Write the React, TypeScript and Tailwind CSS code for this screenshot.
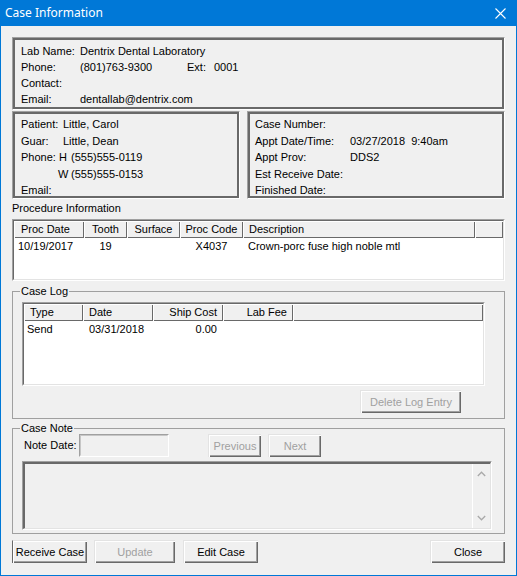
import React from "react";

const sunkenOuter =
  "border border-[#a0a0a0] border-r-white border-b-white";
const sunkenInner2 = "border-2 border-[#696969]";
const sunkenInner =
  "border border-[#696969] border-r-[#e3e3e3] border-b-[#e3e3e3]";
const hdr =
  "h-[17px] leading-[16px] bg-[#f0f0f0] shadow-[inset_1px_1px_0_#fff,inset_-1px_-1px_0_#696969] shrink-0 whitespace-nowrap overflow-hidden";
const btnBase =
  "h-[23px] bg-[#f0f0f0] shadow-[inset_1px_1px_0_#fff,inset_-1px_-1px_0_#696969,inset_-2px_-2px_0_#a0a0a0] border-t border-l border-[#e3e3e3] flex items-center justify-center leading-none";

function Btn({
  className,
  disabled,
  children,
}: {
  className: string;
  disabled?: boolean;
  children: React.ReactNode;
}) {
  return (
    <div
      className={`${btnBase} ${className} ${
        disabled ? "text-[#a0a0a0]" : "text-black"
      }`}
    >
      {children}
    </div>
  );
}

export default function App() {
  return (
    <div className="w-[517px] h-[576px] bg-[#f0f0f0] border border-[#0078d7] border-t-0 flex flex-col font-['Liberation_Sans',Arial,sans-serif] text-[11px] text-black overflow-hidden">
      {/* Title bar */}
      <div className="h-[26px] bg-[#0078d7] -mx-px flex items-center justify-between shrink-0">
        <span className="pl-[5px] text-white text-[12px] font-['Noto_Sans',sans-serif]">
          Case Information
        </span>
        <svg width="11" height="11" viewBox="0 0 11 11" className="mr-[11px]">
          <path d="M0.5 0.5 L10.5 10.5 M10.5 0.5 L0.5 10.5" stroke="#fff" strokeWidth="1.1" />
        </svg>
      </div>

      <div className="px-[11px] flex flex-col">
        {/* Lab box */}
        <div className={`${sunkenOuter} h-[73px] mt-[11px]`}>
          <div className={`${sunkenInner2} h-full pt-[3px] pl-[6px]`}>
            <div className="flex h-4 leading-4">
              <span className="w-[59px]">Lab Name:</span>
              <span>Dentrix Dental Laboratory</span>
            </div>
            <div className="flex h-4 leading-4">
              <span className="w-[59px]">Phone:</span>
              <span className="w-[107px]">(801)763-9300</span>
              <span className="w-[27px]">Ext:</span>
              <span>0001</span>
            </div>
            <div className="flex h-4 leading-4">
              <span className="w-[59px]">Contact:</span>
            </div>
            <div className="flex h-4 leading-4">
              <span className="w-[59px]">Email:</span>
              <span>dentallab@dentrix.com</span>
            </div>
          </div>
        </div>

        {/* Patient + Case boxes */}
        <div className="flex justify-between mt-px">
          <div className={`${sunkenOuter} w-[228px] h-[88px]`}>
            <div className={`${sunkenInner2} h-full pt-[2px] pl-[6px]`}>
              <div className="flex h-[16.5px] leading-[16.5px]">
                <span className="w-[42px]">Patient:</span>
                <span>Little, Carol</span>
              </div>
              <div className="flex h-[16.5px] leading-[16.5px]">
                <span className="w-[42px]">Guar:</span>
                <span>Little, Dean</span>
              </div>
              <div className="flex h-[16.5px] leading-[16.5px]">
                <span className="w-[37px]">Phone:</span>
                <span className="w-[13px] text-right pr-[4px]">H</span>
                <span>(555)555-0119</span>
              </div>
              <div className="flex h-[16.5px] leading-[16.5px]">
                <span className="w-[37px]"></span>
                <span className="w-[13px] text-right pr-[4px]">W</span>
                <span>(555)555-0153</span>
              </div>
              <div className="flex h-[16.5px] leading-[16.5px]">
                <span>Email:</span>
              </div>
            </div>
          </div>
          <div className={`${sunkenOuter} w-[258px] h-[88px]`}>
            <div className={`${sunkenInner2} h-full pt-[2px] pl-[5px]`}>
              <div className="flex h-[16.5px] leading-[16.5px]">
                <span className="w-[95px]">Case Number:</span>
              </div>
              <div className="flex h-[16.5px] leading-[16.5px]">
                <span className="w-[95px]">Appt Date/Time:</span>
                <span>03/27/2018&nbsp;&nbsp;9:40am</span>
              </div>
              <div className="flex h-[16.5px] leading-[16.5px]">
                <span className="w-[95px]">Appt Prov:</span>
                <span>DDS2</span>
              </div>
              <div className="flex h-[16.5px] leading-[16.5px]">
                <span className="w-[95px]">Est Receive Date:</span>
              </div>
              <div className="flex h-[16.5px] leading-[16.5px]">
                <span className="w-[95px]">Finished Date:</span>
              </div>
            </div>
          </div>
        </div>

        {/* Procedure Information */}
        <div className="mt-[2px] h-[14px] leading-[14px]">Procedure Information</div>
        <div className={`${sunkenOuter} mt-[4px] h-[62px] bg-white`}>
          <div className={`${sunkenInner} h-full bg-white`}>
            <div className="flex">
              <div className={`${hdr} w-[70px] pl-[7px]`}>Proc Date</div>
              <div className={`${hdr} w-[43px] text-center`}>Tooth</div>
              <div className={`${hdr} w-[53px] text-center`}>Surface</div>
              <div className={`${hdr} w-[63px] text-center`}>Proc Code</div>
              <div className={`${hdr} w-[232px] pl-[6px]`}>Description</div>
              <div className={`${hdr} flex-1`}></div>
            </div>
            <div className="flex h-4 leading-4">
              <div className="w-[70px] pl-[4px]">10/19/2017</div>
              <div className="w-[43px] text-center">19</div>
              <div className="w-[53px]"></div>
              <div className="w-[63px] text-center">X4037</div>
              <div className="pl-[5px]">Crown-porc fuse high noble mtl</div>
            </div>
          </div>
        </div>

        {/* Case Log */}
        <fieldset className="mt-[4px] h-[134px] border border-[#a0a0a0] pl-[9px] pr-[19px]">
          <legend className="-ml-[2px] px-[1px] leading-[12px]">Case Log</legend>
          <div className={`${sunkenOuter} mt-[5px] w-[463px] h-[84px] bg-white`}>
            <div className={`${sunkenInner} h-full bg-white`}>
              <div className="flex">
                <div className={`${hdr} w-[59px] pl-[6px]`}>Type</div>
                <div className={`${hdr} w-[70px] pl-[6px]`}>Date</div>
                <div className={`${hdr} w-[70px] text-right pr-[6px]`}>Ship Cost</div>
                <div className={`${hdr} w-[70px] text-right pr-[6px]`}>Lab Fee</div>
                <div className={`${hdr} flex-1`}></div>
              </div>
              <div className="flex h-4 leading-4">
                <div className="w-[59px] pl-[3px]">Send</div>
                <div className="w-[70px] pl-[6px]">03/31/2018</div>
                <div className="w-[70px] text-right pr-[6px]">0.00</div>
              </div>
            </div>
          </div>
          <div className="flex justify-end mt-[4px] pr-[24px]">
            <Btn className="w-[101px]" disabled>
              Delete Log Entry
            </Btn>
          </div>
        </fieldset>

        {/* Case Note */}
        <fieldset className="mt-[3px] h-[112px] border border-[#a0a0a0] pl-[9px] pr-[12px]">
          <legend className="-ml-[2px] px-[1px] leading-[12px]">Case Note</legend>
          <div className="flex items-center h-[23px]">
            <span className="w-[57px] pl-[2px]">Note Date:</span>
            <div className={`${sunkenOuter} w-[90px] h-[23px] bg-[#f0f0f0]`}>
              <div className="h-full border border-[#696969] border-r-[#f0f0f0] border-b-[#f0f0f0] opacity-30"></div>
            </div>
            <Btn className="w-[53px] ml-[39px]" disabled>
              Previous
            </Btn>
            <Btn className="w-[53px] ml-[7px]" disabled>
              Next
            </Btn>
          </div>
          <div className={`${sunkenOuter} mt-[4px] w-[470px] h-[69px]`}>
            <div className={`${sunkenInner2} border-r-[#e3e3e3] border-b-[#e3e3e3] border-r border-b h-full flex justify-end`}>
              <div className="w-[18px] h-full border-l border-white flex flex-col justify-between items-center py-[7px]">
                <svg width="9" height="6" viewBox="0 0 9 6">
                  <path d="M0.8 5 L4.5 1.2 L8.2 5" stroke="#a9a9a9" strokeWidth="1.3" fill="none" />
                </svg>
                <svg width="9" height="6" viewBox="0 0 9 6">
                  <path d="M0.8 1 L4.5 4.8 L8.2 1" stroke="#a9a9a9" strokeWidth="1.3" fill="none" />
                </svg>
              </div>
            </div>
          </div>
        </fieldset>

        {/* Bottom buttons */}
        <div className="flex justify-between mt-[6px]">
          <div className="flex">
            <Btn className="w-[75px] border-l-[#696969]">Receive Case</Btn>
            <Btn className="w-[81px] ml-[7px]" disabled>
              Update
            </Btn>
            <Btn className="w-[75px] ml-[8px]">Edit Case</Btn>
          </div>
          <Btn className="w-[75px]">Close</Btn>
        </div>
      </div>
    </div>
  );
}
